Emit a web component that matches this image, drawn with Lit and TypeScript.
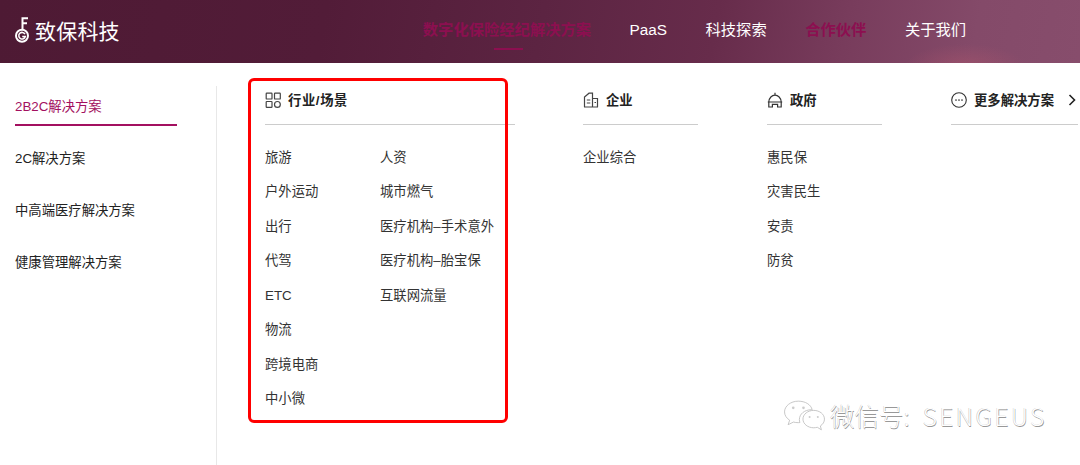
import { LitElement, html, css, svg } from "lit";
import { customElement } from "lit/decorators.js";

const nav = [
  { t: "数字化保险经纪解决方案", active: true, bar: true },
  { t: "PaaS" },
  { t: "科技探索" },
  { t: "合作伙伴", active: true },
  { t: "关于我们" },
];
const side = ["2B2C解决方案", "2C解决方案", "中高端医疗解决方案", "健康管理解决方案"];

const gridIcon = svg`<svg class="ic" viewBox="0 0 16 16" fill="none" stroke="#444" stroke-width="1.2"><rect x="1.2" y="1.2" width="5.8" height="5.800" rx=".6"/><rect x="9.500" y="1.200" width="5.800" height="5.800" rx=".6"/><rect x="1.200" y="9.500" width="5.800" height="5.800" rx=".6"/><circle cx="12.400" cy="12.400" r="2.900"/></svg>`;
const bldIcon = svg`<svg class="ic" viewBox="0 0 16 16" fill="none" stroke="#444" stroke-width="1.2"><path d="M1.500 15V5L6 1.200h3.500V15M9.500 6.500h5V15M1 15h14M3.800 8h3.500M3.800 11h3.500M11.500 10.500h1.500"/></svg>`;
const govIcon = svg`<svg class="ic" viewBox="0 0 16 16" fill="none" stroke="#333" stroke-width="1.2"><path d="M8 .8v2.400M1.800 10C2 5.800 5 3.200 8 3.200s6 2.600 6.200 6.800M.8 10h14.400M1.800 10v5h3.600v-2.600h5.200V15h3.600v-5"/></svg>`;
const moreIcon = svg`<svg class="ic" viewBox="0 0 16 16" fill="none" stroke="#333" stroke-width="1.100"><circle cx="8" cy="8" r="7.300"/><g fill="#333" stroke="none"><circle cx="5" cy="8" r=".85"/><circle cx="8" cy="8" r=".85"/><circle cx="11" cy="8" r=".85"/></g></svg>`;
const chevron = svg`<svg class="chev" viewBox="0 0 8 12" fill="none" stroke="#222" stroke-width="1.600"><path d="M1.500 1l5 5-5 5"/></svg>`;

const keyLogo = svg`<svg class="key" viewBox="0 0 15 26" fill="none" stroke="#fff" stroke-width="2"><path d="M7.500 13V1.200h5.500M7.500 6.200h4.500"/><circle cx="7" cy="18.800" r="6"/><path d="M10 17.100a3.300 3.300 0 1 0 .3 2.400H7.200" stroke-width="1.500"/></svg>`;

const wechat = svg`<svg class="wx" viewBox="0 0 42 30" fill="#fff" stroke="#bbb" stroke-width=".8"><path d="M15 1C7.500 1 1.500 5.700 1.500 11.500c0 3.300 2 6.200 5 8.100L5 24l5.200-2.600c1.500.4 3 .6 4.800.6.500 0 1 0 1.500-.1-.3-1-.5-2-.5-3 0-5.300 5-9.500 11.500-9.500h1C27.300 4.200 21.600 1 15 1z"/><path d="M40.500 18.500C40.500 13.800 35.800 10 30 10s-10.500 3.800-10.500 8.500S24.200 27 30 27c1.200 0 2.400-.2 3.500-.5L37.500 29l-1-3.800c2.500-1.600 4-4 4-6.700z"/><g fill="#ccc" stroke="none"><circle cx="10" cy="7.500" r="1.300"/><circle cx="20" cy="7.500" r="1.300"/><circle cx="26" cy="16.500" r="1"/><circle cx="34" cy="16.500" r="1"/></g></svg>`;

@customElement("app-root")
export class AppRoot extends LitElement {
  static styles = css`
    :host {
      display: block;
      position: relative;
      width: 1080px;
      height: 465px;
      overflow: hidden;
      background: #fff;
      font-family: "Liberation Sans", "Noto Sans CJK SC", sans-serif;
      color: #333;
    }
    .top {
      height: 63px;
      display: flex;
      align-items: center;
      padding: 0 0 3px 15px;
      box-sizing: border-box;
      background:
        radial-gradient(60px 22px at 965px 66px, rgba(190, 90, 110, 0.35), transparent 100%),
        linear-gradient(100deg, #4e1a34 0%, #521c38 30%, #5c2442 50%, #672c4b 66%, #783c5c 78%, #844a69 90%, #874d6c 100%);
    }
    .logo {
      display: flex;
      align-items: center;
      gap: 5px;
      color: #fff;
    }
    .key { width: 15px; height: 26px; }
    .brand {
      font-family: "Noto Sans CJK SC", sans-serif;
      font-size: 21px;
      font-weight: 400;
      letter-spacing: 0.2px;
      line-height: 26px;
    }
    .nav {
      display: flex;
      gap: 38.5px;
      margin-left: 303px;
      align-items: center;
    }
    .nav a {
      position: relative;
      color: #fff;
      font-size: 15.3px;
      line-height: 24px;
      white-space: nowrap;
    }
    .nav a.on {
      color: #8c0f50;
      font-weight: 700;
    }
    .nav a.bar::after {
      content: "";
      position: absolute;
      left: 71px;
      top: 30px;
      width: 29px;
      height: 2px;
      background: #8c0f50;
    }
    .main {
      display: flex;
      height: 402px;
    }
    .side {
      width: 217px;
      box-sizing: border-box;
      margin-top: 23px;
      padding-left: 15px;
      border-right: 1px solid #e8e8e8;
    }
    .side div {
      width: 162px;
      height: 40px;
      margin-bottom: 12px;
      font-size: 13.33px;
      line-height: 42px;
      color: #222;
      box-sizing: border-box;
    }
    .side div.on {
      color: #a31060;
      border-bottom: 2px solid #a31060;
    }
    .cols {
      display: flex;
      padding: 27px 0 0 48px;
    }
    .col { flex: none; }
    .c1 { width: 250px; margin-right: 68px; }
    .c2 { width: 115px; margin-right: 69px; }
    .c3 { width: 115px; margin-right: 69px; }
    .c4 { width: 127px; }
    .head {
      display: flex;
      align-items: center;
      gap: 7px;
      height: 20px;
      padding-bottom: 14px;
      border-bottom: 1px solid #ccc;
      font-size: 13.33px;
      font-weight: 700;
      color: #222;
      white-space: nowrap;
    }
    .head span {
      position: relative;
      top: -1px;
    }
    .head span.wide { letter-spacing: 0.6px; }
    .ic { width: 16px; height: 16px; flex: none; }
    .chev { width: 8px; height: 12px; margin-left: 7px; flex: none; }
    .list {
      display: grid;
      grid-template-columns: 115px 135px;
      grid-auto-flow: column;
      grid-template-rows: repeat(8, 34.43px);
      margin-top: 16px;
      font-size: 13.33px;
      color: #333;
    }
    .list span {
      line-height: 34.43px;
      white-space: nowrap;
    }
    .frame {
      position: absolute;
      left: 248px;
      top: 78px;
      width: 260px;
      height: 345px;
      box-sizing: border-box;
      border: 3px solid #f00;
      border-radius: 6px;
    }
    .mark {
      position: absolute;
      left: 783px;
      top: 398px;
      display: flex;
      align-items: center;
      gap: 4px;
      font-family: "Noto Sans CJK SC", sans-serif;
      font-size: 24.5px;
      font-weight: 300;
      color: #fff;
      text-shadow: 0.6px 0.6px 0.6px #999, -0.3px -0.3px 0.5px #bbb;
      white-space: nowrap;
    }
    .mark b {
      font-weight: 300;
      letter-spacing: 2.4px;
      margin-left: 13px;
    }
    .wx { width: 43px; height: 31px; }
  `;

  render() {
    const rows1 = ["旅游", "户外运动", "出行", "代驾", "ETC", "物流", "跨境电商", "中小微", "人资", "城市燃气", "医疗机构–手术意外", "医疗机构–胎宝保", "互联网流量"];
    return html`
      <header class="top">
        <div class="logo">${keyLogo}<span class="brand">致保科技</span></div>
        <nav class="nav">
          ${nav.map((n) => html`<a class="${n.active ? "on" : ""} ${n.bar ? "bar" : ""}">${n.t}</a>`)}
        </nav>
      </header>
      <div class="main">
        <aside class="side">
          ${side.map((s, i) => html`<div class=${i === 0 ? "on" : ""}>${s}</div>`)}
        </aside>
        <section class="cols">
          <div class="col c1">
            <div class="head">${gridIcon}<span class="wide">行业/场景</span></div>
            <div class="list">${rows1.map((r) => html`<span>${r}</span>`)}</div>
          </div>
          <div class="col c2">
            <div class="head">${bldIcon}<span>企业</span></div>
            <div class="list"><span>企业综合</span></div>
          </div>
          <div class="col c3">
            <div class="head">${govIcon}<span>政府</span></div>
            <div class="list">${["惠民保", "灾害民生", "安责", "防贫"].map((r) => html`<span>${r}</span>`)}</div>
          </div>
          <div class="col c4">
            <div class="head">${moreIcon}<span>更多解决方案</span>${chevron}</div>
          </div>
        </section>
      </div>
      <div class="frame"></div>
      <div class="mark">${wechat}<span>微信号:<b>SENGEUS</b></span></div>
    `;
  }
}
